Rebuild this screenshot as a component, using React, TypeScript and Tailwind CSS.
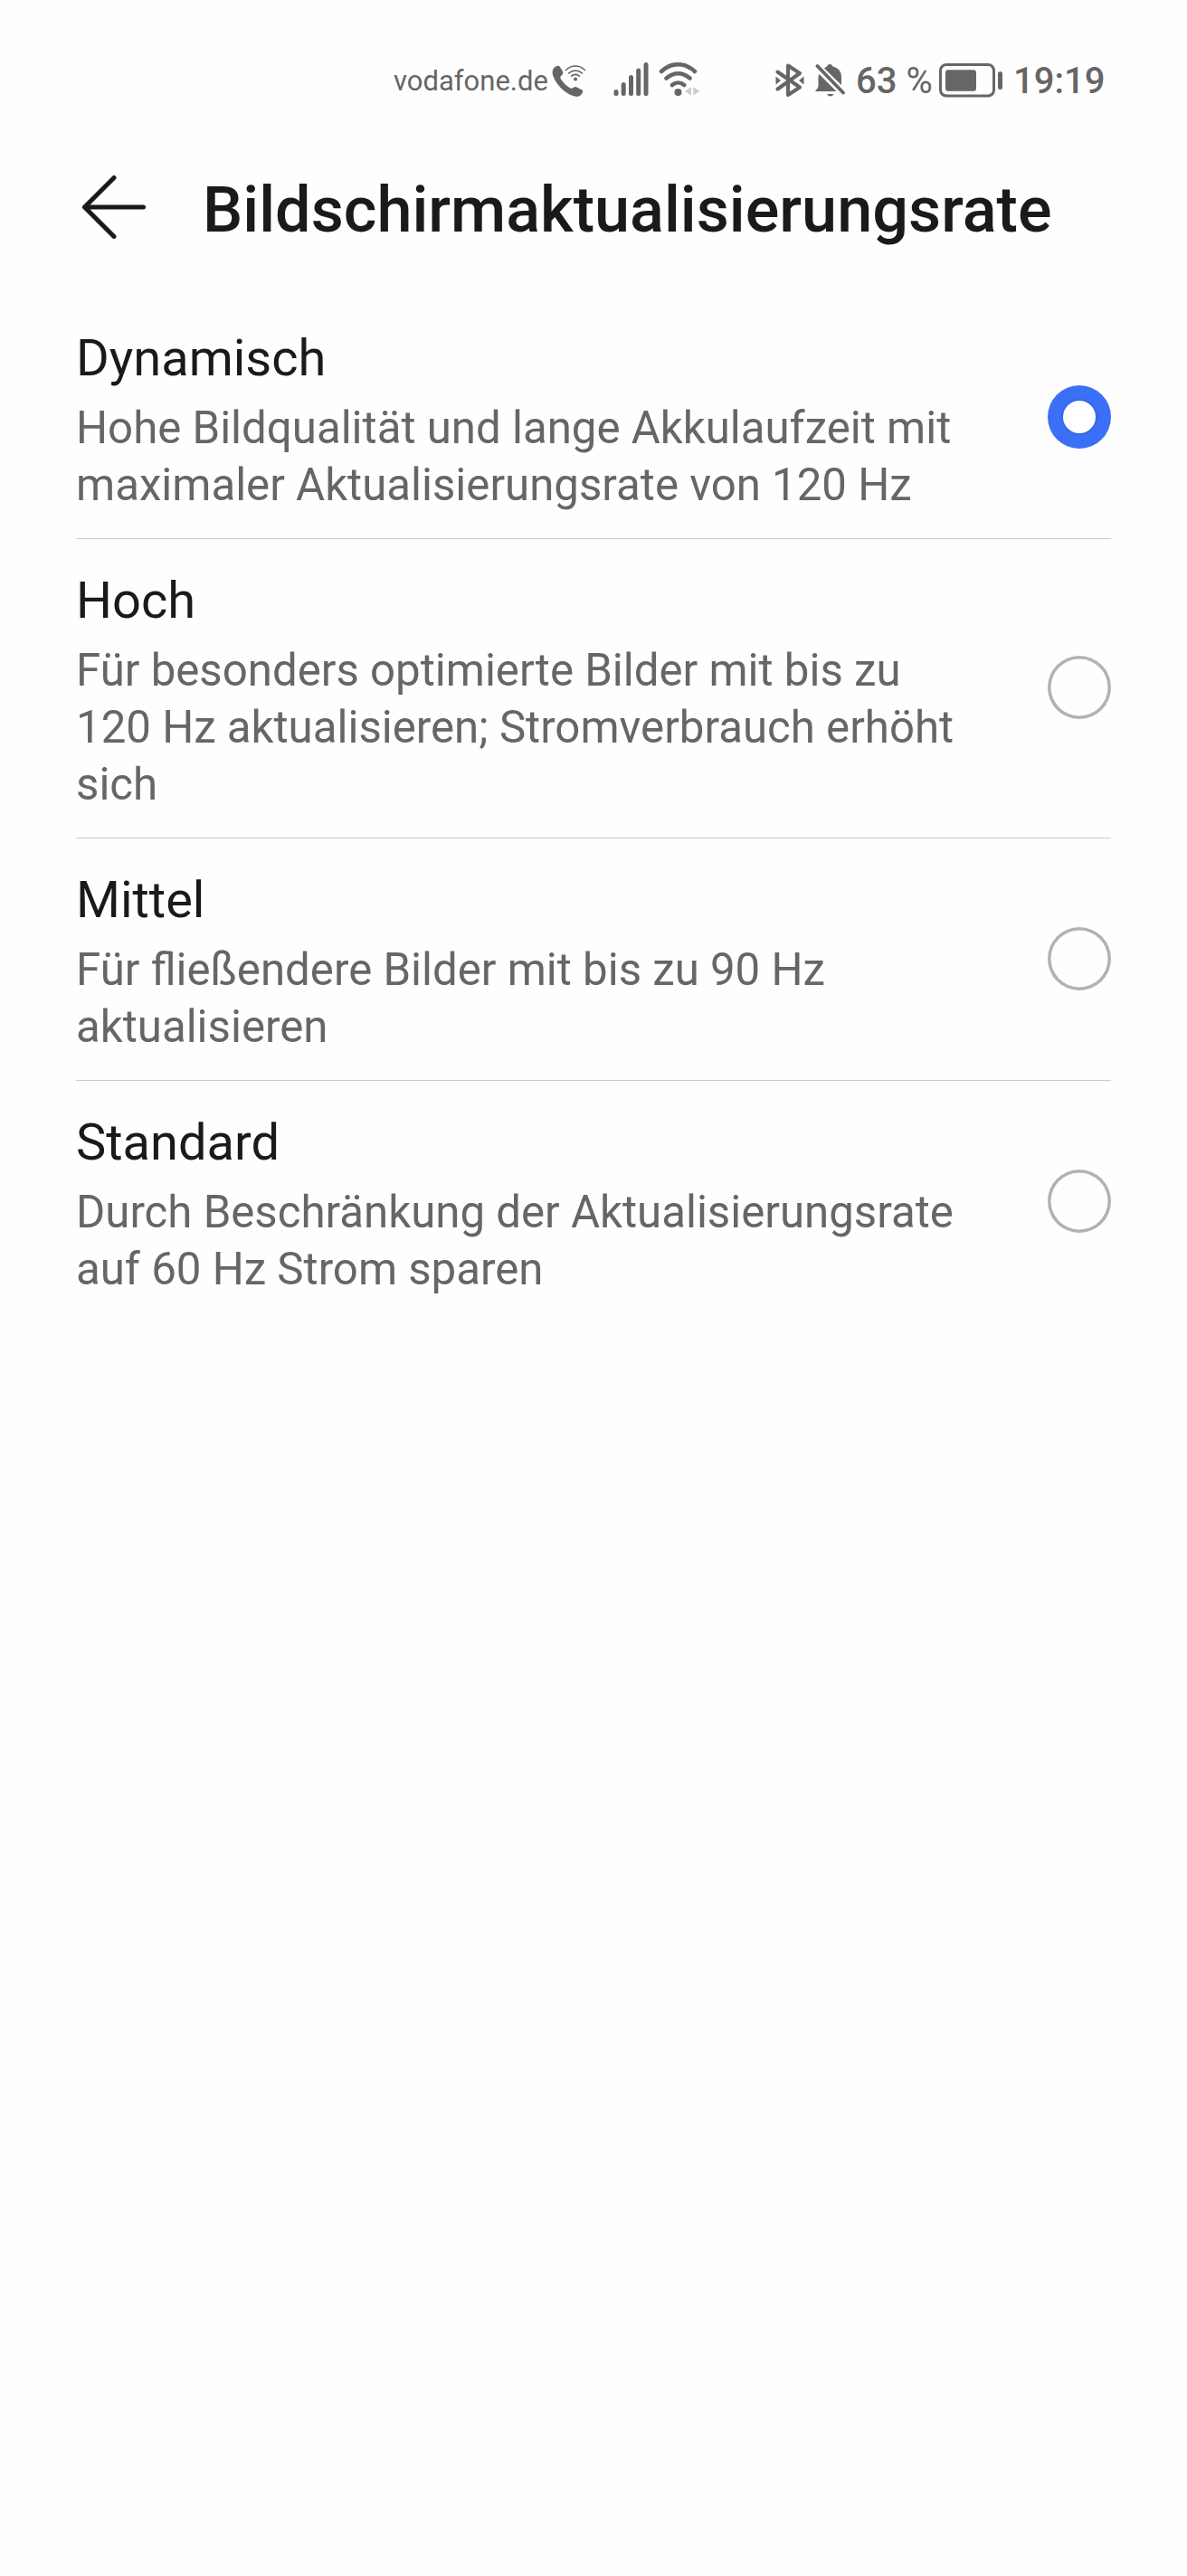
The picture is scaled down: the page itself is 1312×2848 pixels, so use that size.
import { useState } from 'react';

const options = [
  {
    id: 'dynamic',
    title: 'Dynamisch',
    lines: ['Hohe Bildqualität und lange Akkulaufzeit mit', 'maximaler Aktualisierungsrate von 120 Hz'],
  },
  {
    id: 'high',
    title: 'Hoch',
    lines: ['Für besonders optimierte Bilder mit bis zu', '120 Hz aktualisieren; Stromverbrauch erhöht', 'sich'],
  },
  {
    id: 'medium',
    title: 'Mittel',
    lines: ['Für fließendere Bilder mit bis zu 90 Hz', 'aktualisieren'],
  },
  {
    id: 'standard',
    title: 'Standard',
    lines: ['Durch Beschränkung der Aktualisierungsrate', 'auf 60 Hz Strom sparen'],
  },
];

function CallIcon() {
  return (
    <svg width="38" height="38" viewBox="0 0 38 38" fill="none">
      <path
        d="M2 4.5C4.5 1.5 7.5 1 9 3l3 5c.8 1.800.3 3-1.500 4.500-1.500 1.200-1.500 2.500-.500 4 2.500 4 5.500 7 9.500 9.500 1.500 1 2.800.800 4.500-.3 1.200-.8 2.300-1 3.500-.3l5.500 2.800c1.800 1 1.500 2.500 0 4.500-2 3.300-5.500 3.800-9.500 2.300C13 31.500 4.500 22 1.200 12.500.3 9.500.3 6.800 2 4.500Z"
        fill="#666"
      />
      <circle cx="26" cy="16.500" r="2" fill="#666" />
      <path d="M15.500 6.500c6-6 15-6 21 0M18.500 10c4.500-4 10.500-4 15 0M21.500 13.200c2.500-2.500 6.500-2.500 9 0" stroke="#666" strokeWidth="1.600" strokeLinecap="round" />
    </svg>
  );
}

function SignalIcon() {
  return (
    <svg width="40" height="38" viewBox="0 0 40 38" stroke="#666" strokeWidth="5" strokeLinecap="round">
      <path d="M3 32.500v2M11.200 24.500v10M19.500 16.500v18M27.700 9v25.500M36 2.500v32" />
    </svg>
  );
}

function WifiIcon() {
  return (
    <svg width="46" height="38" viewBox="0 0 46 38" fill="none">
      <path d="M3 10C14-.5 29-.5 40 10M8.500 17.500c8-7 18-7 26 0M15 25c4-3.500 9.200-3.500 13.200 0" stroke="#666" strokeWidth="4.500" strokeLinecap="round" />
      <circle cx="21.500" cy="33" r="4" fill="#666" />
      <path d="M36 27v9.500L29 32ZM38.300 27v9.500L45.300 32Z" fill="#ccc" />
    </svg>
  );
}

function BluetoothIcon() {
  return (
    <svg width="32" height="40" viewBox="0 0 32 40" fill="none">
      <path d="M2.500 10.500 27 27.500 14 36V3.500L27 12 2.500 29.500" stroke="#666" strokeWidth="4" strokeLinecap="round" strokeLinejoin="round" />
      <path d="M.5 15.500v9L6 20ZM31.500 15.500v9L26 20Z" fill="#666" />
    </svg>
  );
}

function MutedBellIcon() {
  return (
    <svg width="34" height="38" viewBox="0 0 34 38" fill="none">
      <path d="M13 3.500c1.200-3.300 5.300-3.300 6.500 0C26 5 29 9.500 29 15v9L10 5.500C11 4.500 12 4 13 3.500ZM4.500 12 23.500 31H.3c0-2 3.200-3 3.200-6V15c0-1 .3-2 1-3Z" fill="#666" />
      <path d="M2.500 3 31 32.500" stroke="#666" strokeWidth="3.800" strokeLinecap="round" />
      <path d="M13 34h7.500c-1.500 3.200-6 3.200-7.500 0Z" fill="#666" />
    </svg>
  );
}

function BatteryIcon() {
  return (
    <svg width="71" height="38" viewBox="0 0 71 38" fill="none">
      <rect x="1.500" y="1.500" width="59" height="34.500" rx="6.500" stroke="#666" strokeWidth="3" />
      <rect x="7" y="7.200" width="34" height="23.500" rx="3" fill="#666" />
      <rect x="65" y="9" width="5" height="20" rx="2.500" fill="#666" />
    </svg>
  );
}

function StatusBar() {
  return (
    <div className="flex h-[178px] items-start pl-[435px] pt-[69px] text-[#666]">
      <span className="w-[175px] whitespace-nowrap text-[31px] leading-[42px]">vodafone.de</span>
      <div className="mt-[2px]"><CallIcon /></div>
      <div className="ml-[30px]"><SignalIcon /></div>
      <div className="ml-[10px]"><WifiIcon /></div>
      <div className="ml-[83px]"><BluetoothIcon /></div>
      <div className="ml-[12px] mt-[1px]"><MutedBellIcon /></div>
      <span className="ml-[11px] w-[92px] whitespace-nowrap text-[40px] leading-[42px]">
        <span className="font-medium">63</span> %
      </span>
      <div className="mt-[1px]"><BatteryIcon /></div>
      <span className="ml-[11px] whitespace-nowrap text-[40px] font-medium leading-[42px]">19:19</span>
    </div>
  );
}

function Radio({ checked }: { checked: boolean }) {
  return checked ? (
    <span className="mb-[2px] flex size-[70px] shrink-0 items-center justify-center rounded-full bg-[#3a6ff6]">
      <span className="size-[36px] rounded-full bg-white shadow-[0_0_3px_1px_rgba(0,0,0,0.12)]" />
    </span>
  ) : (
    <span className="mb-[2px] size-[70px] shrink-0 rounded-full shadow-[inset_0_0_0_3.5px_#b2b2b2]" />
  );
}

export default function App() {
  const [selected, setSelected] = useState('dynamic');

  return (
    <div className="h-[2848px] w-[1312px] overflow-hidden bg-[#fefefe] font-['Roboto',sans-serif]">
      <StatusBar />

      <header className="flex h-[150px] items-start pl-[91px]">
        <svg className="mt-[15px]" width="70" height="72" viewBox="0 0 70 72" fill="none" stroke="#1a1a1a" strokeWidth="5" strokeLinecap="round" strokeLinejoin="round">
          <path d="M67.500 36H3M35 3.500 2.500 36 35 68.500" />
        </svg>
        <h1 className="ml-[63px] mt-[13px] whitespace-nowrap text-[70.2px] font-medium leading-[82px] text-[#1a1a1a]">
          Bildschirmaktualisierungsrate
        </h1>
      </header>

      <main className="px-[84px]">
        {options.map((option, idx) => (
          <button
            key={option.id}
            onClick={() => setSelected(option.id)}
            className={`flex w-full items-center justify-between text-left ${idx < options.length - 1 ? 'border-b border-[#cbcbcb]' : ''}`}
          >
            <span className="block pb-[27px] pt-[35px]">
              <span className="block text-[56px] leading-[66px] text-[#1a1a1a]">{option.title}</span>
              <span className="mt-[13px] block text-[49.2px] leading-[63px] text-[#666]">
                {option.lines.map(line => (
                  <span key={line} className="block whitespace-nowrap">{line}</span>
                ))}
              </span>
            </span>
            <Radio checked={selected === option.id} />
          </button>
        ))}
      </main>
    </div>
  );
}
